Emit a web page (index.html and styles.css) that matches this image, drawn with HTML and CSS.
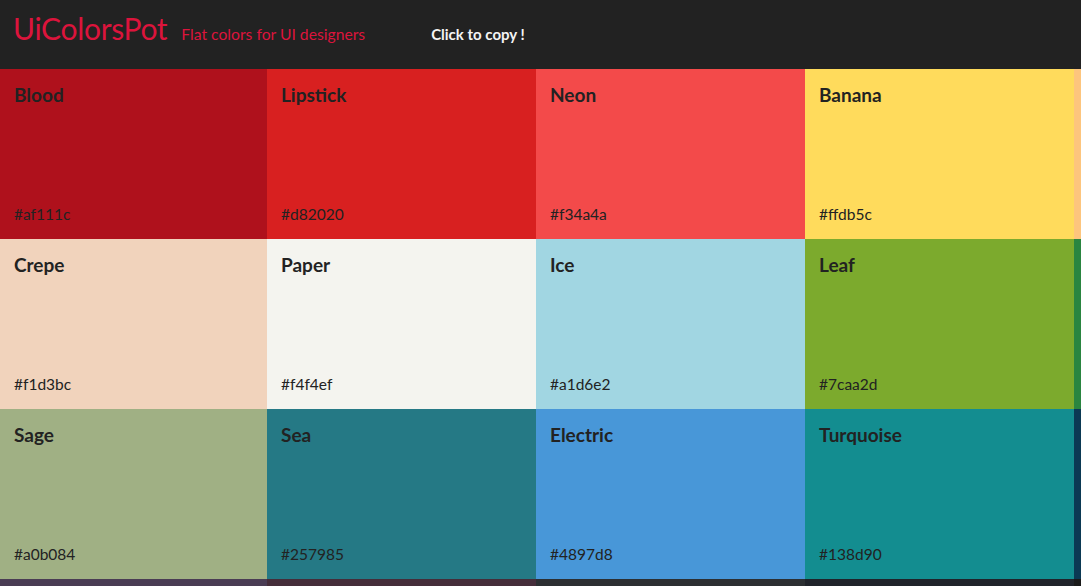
FILE: index.html
```html
<!DOCTYPE html>
<html>
<head>
<meta charset="utf-8">
<title>UiColorsPot</title>
<link rel="stylesheet" href="styles.css">
</head>
<body>
<header class="top">
  <h1 class="logo">UiColorsPot</h1>
  <span class="tagline">Flat colors for UI designers</span>
  <span class="hint">Click to copy !</span>
</header>
<main class="palette">
  <div class="swatch" style="background:#af111c"><span class="name">Blood</span><span class="hex">#af111c</span></div>
  <div class="swatch" style="background:#d82020"><span class="name">Lipstick</span><span class="hex">#d82020</span></div>
  <div class="swatch" style="background:#f34a4a"><span class="name">Neon</span><span class="hex">#f34a4a</span></div>
  <div class="swatch" style="background:#ffdb5c"><span class="name">Banana</span><span class="hex">#ffdb5c</span></div>
  <div class="swatch" style="background:#fdc57d"></div>
  <div class="swatch" style="background:#f1d3bc"><span class="name">Crepe</span><span class="hex">#f1d3bc</span></div>
  <div class="swatch" style="background:#f4f4ef"><span class="name">Paper</span><span class="hex">#f4f4ef</span></div>
  <div class="swatch" style="background:#a1d6e2"><span class="name">Ice</span><span class="hex">#a1d6e2</span></div>
  <div class="swatch" style="background:#7caa2d"><span class="name">Leaf</span><span class="hex">#7caa2d</span></div>
  <div class="swatch" style="background:#2a8540"></div>
  <div class="swatch" style="background:#a0b084"><span class="name">Sage</span><span class="hex">#a0b084</span></div>
  <div class="swatch" style="background:#257985"><span class="name">Sea</span><span class="hex">#257985</span></div>
  <div class="swatch" style="background:#4897d8"><span class="name">Electric</span><span class="hex">#4897d8</span></div>
  <div class="swatch" style="background:#138d90"><span class="name">Turquoise</span><span class="hex">#138d90</span></div>
  <div class="swatch" style="background:#0b3954"></div>
  <div class="swatch" style="background:#4a3c54"></div>
  <div class="swatch" style="background:#452d3a"></div>
  <div class="swatch" style="background:#2c2f32"></div>
  <div class="swatch" style="background:#20232a"></div>
  <div class="swatch" style="background:#1a1a1a"></div>
</main>
</body>
</html>
```
FILE: styles.css
```css
html, body {
  margin: 0;
  padding: 0;
  height: 586px;
  overflow: hidden;
  background: #222222;
  font-family: Lato, "Open Sans", sans-serif;
}
.top {
  height: 69px;
  box-sizing: border-box;
  background: #222222;
  display: flex;
  align-items: baseline;
  padding: 10px 0 0 13px;
}
.logo {
  margin: 0;
  font-size: 30px;
  font-weight: 400;
  color: #dc143c;
  letter-spacing: -0.3px;
}
.tagline {
  margin-left: 14px;
  font-size: 15.7px;
  color: #dc143c;
}
.hint {
  margin-left: 66px;
  font-size: 15px;
  font-weight: 700;
  color: #f4f4f4;
}
.palette {
  display: grid;
  grid-template-columns: 267px 269px 269px 269px 269px;
  grid-auto-rows: 170px;
  width: 1343px;
}
.swatch {
  display: flex;
  flex-direction: column;
  justify-content: space-between;
  padding: 14px 14px 16px;
  box-sizing: border-box;
  color: #222222;
}
.name {
  font-size: 19px;
  font-weight: 700;
}
.hex {
  font-size: 15.5px;
}
```
